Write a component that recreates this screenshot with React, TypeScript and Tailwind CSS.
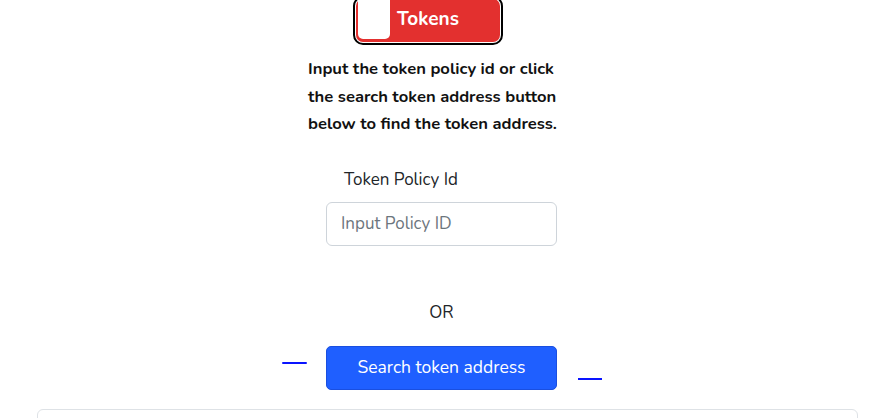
import React from "react";

export default function App() {
  const font = { fontFamily: '"Nunito", "Noto Sans", "Open Sans", sans-serif' };
  return (
    <div className="relative w-[895px] h-[418px] overflow-hidden bg-white text-[#212529]" style={font}>
      <div className="flex flex-col items-start">
        {/* toggle */}
        <div className="ml-[353px] mt-[-4px] w-[150px] h-[49px] rounded-[10px] border-2 border-black p-px bg-white">
          <div className="w-full h-full rounded-[7px] bg-[#e3302f] flex items-stretch pl-[2px] pb-[3px]">
            <div className="w-[32px] bg-white rounded-b-[5px]" />
            <div className="flex-1 flex items-center pl-[7px] text-white font-bold text-[19px]">Tokens</div>
          </div>
        </div>
        {/* paragraph */}
        <p className="ml-[308px] mt-[10px] w-[256px] font-bold text-[16.6px] leading-[27.5px] text-[#111]">
          Input the token policy id or click the search token address button below to find the token address.
        </p>
        <div className="ml-[344px] mt-[29px] text-[17px] leading-[26px]">Token Policy Id</div>
        <input
          className="ml-[326px] mt-[9px] w-[231px] h-[44px] rounded-[6px] border border-[#ced4da] px-[14px] text-[17px] placeholder:text-[#6c757d] outline-none"
          placeholder="Input Policy ID"
          style={font}
        />
        <div className="ml-[326px] mt-[54px] w-[231px] text-center text-[17px] leading-[26px]">OR</div>
        <div className="mt-[20px] flex items-start">
          <div className="ml-[282px] mt-[16px] w-[25px] h-[2px] bg-[#0a14ff] rounded-full" />
          <button className="ml-[19px] w-[231px] h-[44px] rounded-[5px] bg-[#1f5fff] border border-[#1a4fe0] text-white text-[17.5px]" style={font}>
            Search token address
          </button>
          <div className="ml-[21px] mt-[32px] w-[24px] h-[2px] bg-[#0a14ff]" />
        </div>
        <div className="ml-[37px] mt-[19px] w-[821px] h-[40px] rounded-t-[6px] border border-[#dee2e6]" />
      </div>
    </div>
  );
}
